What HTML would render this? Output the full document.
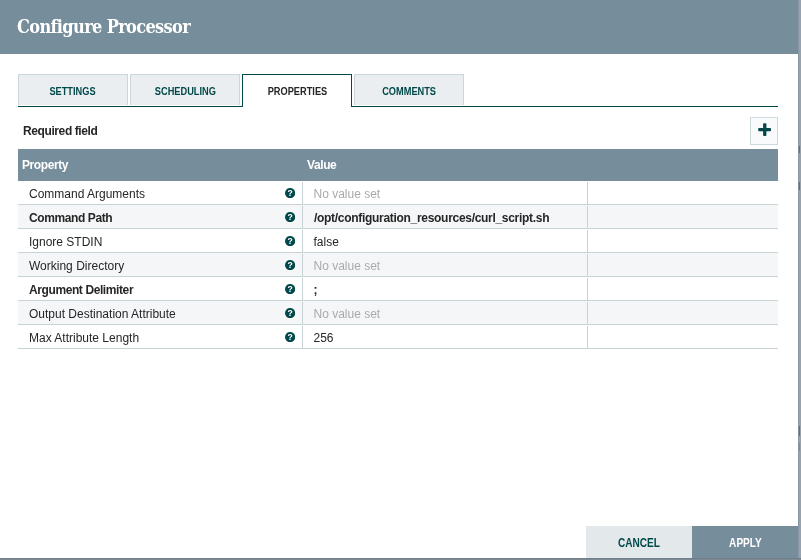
<!DOCTYPE html>
<html>
<head>
<meta charset="utf-8">
<title>Configure Processor</title>
<style>
html,body{margin:0;padding:0;}
body{width:801px;height:560px;overflow:hidden;background:#94a3ad;font-family:"Liberation Sans",sans-serif;position:relative;}
#bgstrip{position:absolute;left:798px;top:0;width:3px;height:560px;background:#96a3ae;border-left:1px solid #8997a2;box-sizing:border-box;}
#bgstrip i{position:absolute;left:0;width:1px;background:#5f6b75;}
#bgbottom{position:absolute;left:0;top:558px;width:801px;height:2px;background:#7d8a93;border-top:1px solid #707f89;box-sizing:border-box;}
#dialog{position:absolute;left:0;top:0;width:798px;height:558px;background:#fff;will-change:transform;}
#header{position:absolute;left:0;top:0;width:798px;height:54px;background:#768d9b;}
#title{position:absolute;left:17px;top:15px;color:#fff;font-family:"DejaVu Serif Condensed","DejaVu Serif","Liberation Serif",serif;font-stretch:condensed;font-weight:bold;font-size:18px;letter-spacing:-0.65px;white-space:nowrap;line-height:24px;}
.tab{position:absolute;top:74px;width:108px;height:30px;border:1px solid #cbd8db;border-bottom:none;background:#eaeef0;color:#004849;font-size:11px;font-weight:bold;text-align:center;line-height:33px;}
.tab span,#cancel span,#apply span{display:inline-block;transform:scaleX(0.84);transform-origin:50% 50%;}
.tab.sel{background:#fff;border:1px solid #004849;border-bottom:none;color:#262626;height:32px;}
#tabline{position:absolute;left:18px;top:106px;width:760px;height:1px;background:#004849;}
#req{position:absolute;left:23px;top:123px;font-size:12px;font-weight:bold;letter-spacing:-0.4px;color:#262626;line-height:16px;}
#plus{position:absolute;left:750px;top:117px;width:26px;height:26px;border:1px solid #cfdadd;background:#f9fafb;}
#thead{position:absolute;left:18px;top:149px;width:760px;height:32px;background:#768d9b;color:#fff;font-weight:bold;font-size:12px;letter-spacing:-0.4px;line-height:32px;}
.row{position:absolute;left:18px;width:760px;height:23px;border-bottom:1px solid #c7d2d7;font-size:12px;line-height:24px;color:#262626;}
.row.odd{background:#f4f6f7;}
.row .n{position:absolute;left:11px;top:1px;white-space:nowrap;}
.row .v{position:absolute;left:295.5px;top:1px;white-space:nowrap;}
.row .sep1{position:absolute;left:284px;top:1px;width:1px;height:23px;background:#c7d2d7;}
.row .sep2{position:absolute;left:569px;top:1px;width:1px;height:23px;background:#c7d2d7;}
.row .q{position:absolute;left:266.7px;top:6.6px;width:10.2px;height:10.2px;}
.b{font-weight:bold;letter-spacing:-0.4px;}
.unset{color:#aaaaaa;}
#cancel{position:absolute;left:586px;top:526px;width:106px;height:32px;background:#e3e8eb;color:#004849;font-size:12px;font-weight:bold;text-align:center;line-height:35px;}
#apply{position:absolute;left:692px;top:526px;width:106px;height:32px;background:#768d9b;color:#fff;font-size:12px;font-weight:bold;text-align:center;line-height:35px;}
</style>
</head>
<body>
<div id="dialog">
  <div id="header"><div id="title">Configure Processor</div></div>
  <div id="tabline"></div>
  <div class="tab" style="left:18px"><span>SETTINGS</span></div>
  <div class="tab" style="left:130px"><span>SCHEDULING</span></div>
  <div class="tab sel" style="left:242px"><span>PROPERTIES</span></div>
  <div class="tab" style="left:354px"><span>COMMENTS</span></div>
  <div id="req">Required field</div>
  <div id="plus"><svg width="26" height="26" viewBox="0 0 26 26"><rect x="7.2" y="9.9" width="12.8" height="3.3" rx="0.9" fill="#004849"/><rect x="12.1" y="5.3" width="3.3" height="12.6" rx="0.9" fill="#004849"/></svg></div>
  <div id="thead"><span style="position:absolute;left:4px">Property</span><span style="position:absolute;left:289px">Value</span></div>

  <div class="row" style="top:181px"><span class="n">Command Arguments</span><svg class="q" viewBox="0 0 10 10"><circle cx="5" cy="5" r="5" fill="#004849"/><text x="5" y="8.2" font-size="8.5" font-weight="bold" fill="#fff" text-anchor="middle" font-family="Liberation Sans, sans-serif">?</text></svg><i class="sep1"></i><span class="v unset">No value set</span><i class="sep2"></i></div>
  <div class="row odd" style="top:205px"><span class="n b">Command Path</span><svg class="q" viewBox="0 0 10 10"><circle cx="5" cy="5" r="5" fill="#004849"/><text x="5" y="8.2" font-size="8.5" font-weight="bold" fill="#fff" text-anchor="middle" font-family="Liberation Sans, sans-serif">?</text></svg><i class="sep1"></i><span class="v b" style="left:296px;letter-spacing:-0.3px">/opt/configuration_resources/curl_script.sh</span><i class="sep2"></i></div>
  <div class="row" style="top:229px"><span class="n">Ignore STDIN</span><svg class="q" viewBox="0 0 10 10"><circle cx="5" cy="5" r="5" fill="#004849"/><text x="5" y="8.2" font-size="8.5" font-weight="bold" fill="#fff" text-anchor="middle" font-family="Liberation Sans, sans-serif">?</text></svg><i class="sep1"></i><span class="v">false</span><i class="sep2"></i></div>
  <div class="row odd" style="top:253px"><span class="n">Working Directory</span><svg class="q" viewBox="0 0 10 10"><circle cx="5" cy="5" r="5" fill="#004849"/><text x="5" y="8.2" font-size="8.5" font-weight="bold" fill="#fff" text-anchor="middle" font-family="Liberation Sans, sans-serif">?</text></svg><i class="sep1"></i><span class="v unset">No value set</span><i class="sep2"></i></div>
  <div class="row" style="top:277px"><span class="n b">Argument Delimiter</span><svg class="q" viewBox="0 0 10 10"><circle cx="5" cy="5" r="5" fill="#004849"/><text x="5" y="8.2" font-size="8.5" font-weight="bold" fill="#fff" text-anchor="middle" font-family="Liberation Sans, sans-serif">?</text></svg><i class="sep1"></i><span class="v b">;</span><i class="sep2"></i></div>
  <div class="row odd" style="top:301px"><span class="n">Output Destination Attribute</span><svg class="q" viewBox="0 0 10 10"><circle cx="5" cy="5" r="5" fill="#004849"/><text x="5" y="8.2" font-size="8.5" font-weight="bold" fill="#fff" text-anchor="middle" font-family="Liberation Sans, sans-serif">?</text></svg><i class="sep1"></i><span class="v unset">No value set</span><i class="sep2"></i></div>
  <div class="row" style="top:325px"><span class="n">Max Attribute Length</span><svg class="q" viewBox="0 0 10 10"><circle cx="5" cy="5" r="5" fill="#004849"/><text x="5" y="8.2" font-size="8.5" font-weight="bold" fill="#fff" text-anchor="middle" font-family="Liberation Sans, sans-serif">?</text></svg><i class="sep1"></i><span class="v">256</span><i class="sep2"></i></div>

  <div id="cancel"><span>CANCEL</span></div>
  <div id="apply"><span>APPLY</span></div>
</div>
<div id="bgstrip"><i style="top:146px;height:7px"></i><i style="top:182px;height:8px"></i><i style="top:426px;height:10px"></i><i style="top:443px;height:8px;opacity:.4"></i></div>
<div id="bgbottom"></div>
</body>
</html>
